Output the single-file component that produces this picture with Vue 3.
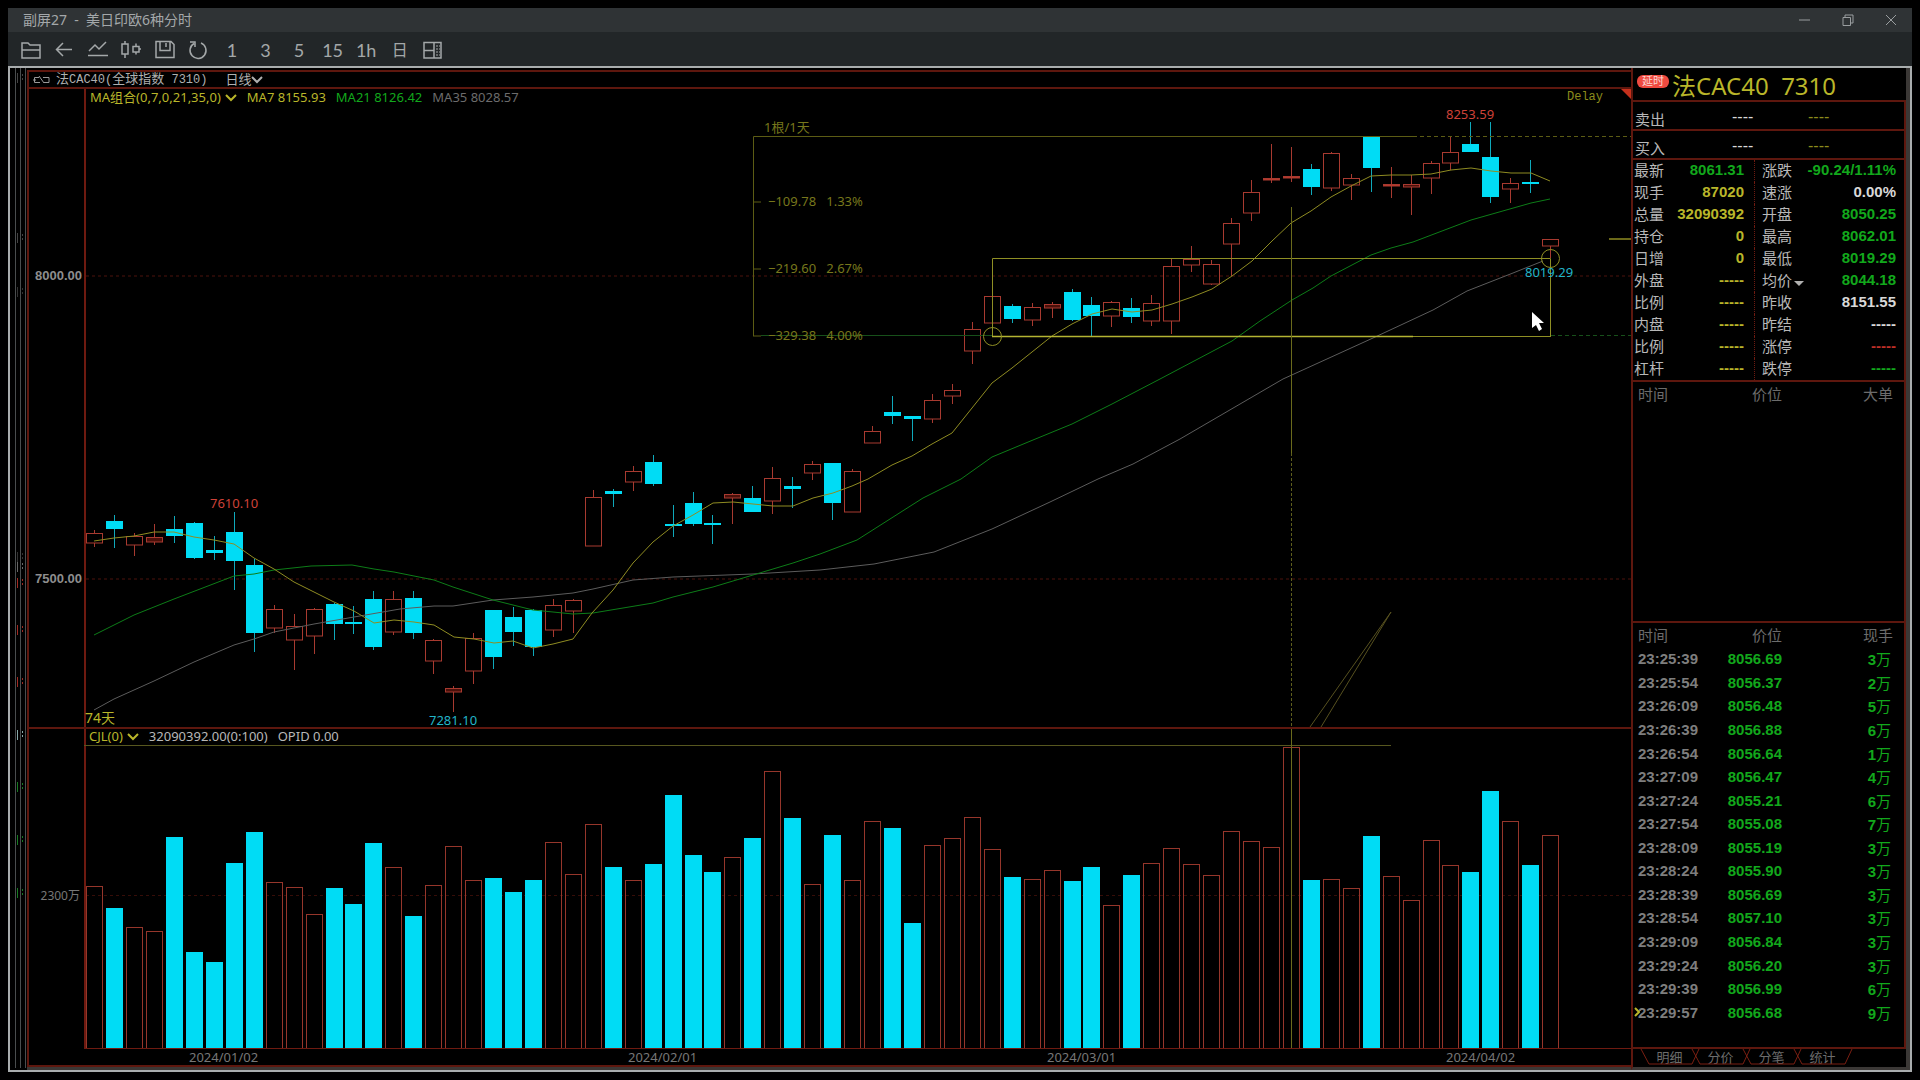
<script setup>
// candle: [filled, high, bodyTop, bodyBottom, low, volumeTop]
const raw = [
  [0, 530, 533, 543, 547, 886], [1, 515, 521, 529, 548, 908], [0, 533, 536, 545, 556, 927], [0, 524, 537, 542, 545, 931],
  [1, 516, 529, 536, 543, 837], [1, 522, 523, 558, 559, 952], [1, 536, 550, 553, 560, 962], [1, 512, 532, 561, 590, 863],
  [1, 559, 565, 633, 652, 832], [0, 605, 609, 628, 633, 882], [0, 614, 626, 640, 670, 887], [0, 608, 609, 636, 654, 914],
  [1, 603, 604, 624, 640, 888], [1, 606, 622, 624, 634, 904], [1, 591, 599, 647, 650, 843], [0, 591, 599, 632, 635, 867],
  [1, 591, 598, 633, 639, 916], [0, 639, 640, 661, 674, 885], [0, 686, 688, 692, 712, 846], [0, 633, 638, 671, 684, 880],
  [1, 610, 610, 657, 669, 878], [1, 607, 617, 632, 646, 892], [1, 609, 610, 647, 656, 880], [0, 599, 605, 630, 637, 842],
  [0, 599, 600, 611, 633, 874], [0, 490, 497, 546, 546, 824], [1, 489, 491, 494, 507, 867], [0, 466, 471, 482, 491, 880],
  [1, 455, 462, 484, 486, 864], [1, 505, 524, 526, 537, 795], [1, 492, 503, 524, 526, 855], [1, 515, 523, 525, 544, 872],
  [0, 493, 494, 498, 524, 857], [1, 486, 498, 512, 512, 838], [0, 467, 478, 501, 514, 771], [1, 477, 486, 489, 508, 818],
  [0, 461, 464, 473, 480, 884], [1, 463, 463, 503, 520, 835], [0, 469, 471, 512, 512, 880], [0, 426, 431, 443, 443, 821],
  [1, 396, 412, 416, 424, 828], [1, 416, 416, 419, 441, 923], [0, 394, 400, 419, 423, 845], [0, 384, 390, 396, 404, 838],
  [0, 322, 329, 351, 364, 817], [0, 296, 296, 323, 323, 849], [1, 304, 306, 319, 323, 877], [0, 303, 307, 320, 326, 879],
  [0, 302, 304, 308, 318, 870], [1, 289, 292, 320, 321, 881], [1, 297, 305, 316, 336, 867], [0, 301, 302, 316, 327, 905],
  [1, 298, 308, 317, 323, 875], [0, 295, 303, 321, 326, 863], [0, 259, 266, 321, 334, 848], [0, 246, 259, 265, 272, 864],
  [0, 260, 264, 284, 285, 875], [0, 218, 223, 244, 276, 831], [0, 180, 192, 213, 221, 841], [0, 144, 178, 180, 183, 847],
  [0, 147, 176, 178, 182, 747], [1, 164, 169, 187, 195, 880], [0, 152, 153, 188, 191, 879], [0, 174, 178, 185, 200, 888],
  [1, 137, 137, 168, 192, 836], [0, 167, 184, 186, 198, 876], [0, 175, 184, 187, 215, 900], [0, 161, 163, 178, 194, 840],
  [0, 136, 152, 163, 170, 865], [1, 122, 144, 152, 152, 872], [1, 122, 157, 197, 203, 791], [0, 178, 183, 189, 203, 821],
  [1, 160, 182, 184, 193, 865], [0, 239, 239, 246, 258, 835]
]
const candles = raw.map(([filled, high, top, bottom, low, vol], i) => ({
  filled: !!filled, high, top, bottom, low, vol, i,
  x: Math.round(94.2 + i * 19.945) + 0.5
}))

const ma7 = '94,541 114,538 134,536 154,532 174,532 194,537 214,540 234,544 254,558 274,569 294,582 314,592 334,602 354,611 374,623 394,620 414,622 434,625 454,637 474,639 494,643 513,641 533,648 553,644 573,639 592,613 613,590 633,563 653,542 673,526 693,515 713,503 733,502 753,504 773,506 793,506 813,498 833,493 852,486 868,479 892,465 912,456 932,444 952,433 972,408 992,383 1012,368 1032,352 1052,336 1072,324 1092,314 1112,309 1132,312 1152,310 1172,304 1192,297 1212,289 1232,276 1252,261 1272,241 1291,223 1311,211 1331,197 1351,186 1371,176 1391,175 1411,175 1431,174 1451,170 1471,168 1491,171 1511,173 1531,173 1550,181'
const ma21 = '94,635 134,615 174,599 234,576 254,574 274,570 311,566 352,565 374,569 394,572 434,580 453,587 493,600 533,610 573,614 593,613 653,603 673,597 713,587 753,575 793,563 820,554 857,540 923,498 961,479 992,457 1033,440 1072,424 1112,404 1160,379 1232,341 1260,321 1292,300 1313,288 1331,276 1371,255 1391,248 1413,242 1471,220 1531,203 1550,199'
const ma35 = '94,710 114,699 154,681 194,662 234,645 254,639 274,632 314,624 354,617 400,609 434,606 453,606 493,600 533,597 573,593 593,589 633,580 673,577 753,574 820,570 874,564 934,552 992,529 1050,502 1098,479 1133,464 1180,439 1283,379 1373,338 1433,310 1467,291 1513,273 1543,261'

const windowTitle = '副屏27  -  美日印欧6种分时'
const symbolTitle = '法CAC40  7310'

const ruler = [
  { y: 202, text: '−109.78   1.33%' },
  { y: 269, text: '−219.60   2.67%' },
  { y: 336, text: '−329.38   4.00%' }
]
const dates = [[189, '2024/01/02'], [628, '2024/02/01'], [1047, '2024/03/01'], [1446, '2024/04/02']]

const stats = [
  ['最新', '8061.31', 'g', '涨跌', '-90.24/1.11%', 'g'],
  ['现手', '87020', 'y', '速涨', '0.00%', 'w'],
  ['总量', '32090392', 'y', '开盘', '8050.25', 'g'],
  ['持仓', '0', 'y', '最高', '8062.01', 'g'],
  ['日增', '0', 'y', '最低', '8019.29', 'g'],
  ['外盘', '-----', 'y', '均价', '8044.18', 'g'],
  ['比例', '-----', 'y', '昨收', '8151.55', 'w'],
  ['内盘', '-----', 'y', '昨结', '-----', 'w'],
  ['比例', '-----', 'y', '涨停', '-----', 'r'],
  ['杠杆', '-----', 'y', '跌停', '-----', 'g']
]
const ticks = [
  ['23:25:39', '8056.69', 3], ['23:25:54', '8056.37', 2], ['23:26:09', '8056.48', 5], ['23:26:39', '8056.88', 6],
  ['23:26:54', '8056.64', 1], ['23:27:09', '8056.47', 4], ['23:27:24', '8055.21', 6], ['23:27:54', '8055.08', 7],
  ['23:28:09', '8055.19', 3], ['23:28:24', '8055.90', 3], ['23:28:39', '8056.69', 3], ['23:28:54', '8057.10', 3],
  ['23:29:09', '8056.84', 3], ['23:29:24', '8056.20', 3], ['23:29:39', '8056.99', 6], ['23:29:57', '8056.68', 9]
]
const tabs = ['明细', '分价', '分笔', '统计']
const stripMarks = [
  [78, '#444'], [238, '#444'], [292, '#333'], [557, '#333'], [567, '#666'], [583, '#a02a22'], [630, '#a02a22'],
  [682, '#a02a22'], [735, '#8aa'], [787, '#177a22'], [840, '#177a22'], [893, '#177a22']
]
</script>

<template>
  <div class="window">
    <header class="titlebar">
      <h1>{{ windowTitle }}</h1>
      <div class="winbtns">
        <button aria-label="最小化"><svg width="12" height="12"><path d="M0 6H11" /></svg></button>
        <button aria-label="还原"><svg width="12" height="12"><path d="M1 3.500H8.500V11.500H1ZM3 3V1H11V9H9" /></svg></button>
        <button aria-label="关闭"><svg width="12" height="12"><path d="M1 1L11 11M11 1L1 11" /></svg></button>
      </div>
    </header>

    <div class="toolbar">
      <nav class="tools">
        <button aria-label="打开"><svg width="22" height="20"><path d="M2 18V3H8L10 5H20V18ZM2 10H20" /></svg></button>
        <button aria-label="返回"><svg width="22" height="20"><path d="M19 9.500H4M10 3L3.500 9.500L10 16" /></svg></button>
        <button aria-label="分时"><svg width="22" height="20"><path d="M2 11L8 5L12 9L19 2M1 15.500H21" /></svg></button>
        <button aria-label="K线"><svg width="22" height="20"><path d="M2 4H8V14H2ZM5 1V4M5 14V18M13 6.500H19V12H13ZM16 3.500V6.500M16 12V14.500M19 9H21" /></svg></button>
        <button aria-label="保存"><svg width="22" height="20"><path d="M2 1.500H17L20 4.500V17.500H2ZM6 2V10.500H16V2M12 3V7" /></svg></button>
        <button aria-label="刷新"><svg width="22" height="20"><path d="M14 3A8 8 0 1 1 7 3.500M3 2H8V7" /></svg></button>
        <button>1</button>
        <button>3</button>
        <button>5</button>
        <button>15</button>
        <button>1h</button>
        <button class="day">日</button>
        <button aria-label="布局"><svg width="22" height="20"><path d="M2 2.500H19V18H2ZM12 3V18M2 10.500H12" /><path d="M14 6H18M14 9H18M14 12H18M14 15H18" stroke-width="1" stroke-dasharray="2 1" /></svg></button>
      </nav>
    </div>

    <main class="content">
      <div class="strip">
        <svg width="17" height="1002" viewBox="10 68 17 1002">
          <path d="M15.500 68V1068M20.500 68V1068M25.500 68V1068" stroke="#4a4d4e" stroke-width="1" />
          <g v-for="m in stripMarks" :key="m[0]" :stroke="m[1]">
            <path :d="`M17.500 ${m[0] - 5}V${m[0] + 5}`" />
            <path :d="`M22.500 ${m[0] - 4}V${m[0] + 4}`" stroke-dasharray="2 2" />
          </g>
        </svg>
      </div>

      <section class="chart">
        <div class="chart-head">
          <svg class="link" width="19" height="10"><path d="M7 2.500H2.500V7.500H8M7 1L12 8M11 2.500H17V7.500H12M1 5H4" /></svg>
          <span class="sym"><b>法</b>CAC40(<b>全球指数</b> 7310)</span>
          <button class="period">日线<svg width="12" height="8"><path d="M1 1L6 6L11 1" /></svg></button>
        </div>
        <div class="ma-row">
          <button class="y">MA组合(0,7,0,21,35,0)<svg width="12" height="8"><path d="M1 1L6 6L11 1" /></svg></button>
          <span class="y">MA7 8155.93</span>
          <span class="g">MA21 8126.42</span>
          <span class="dim">MA35 8028.57</span>
          <span class="delay">Delay</span>
          <i class="corner"></i>
        </div>

        <svg class="plot" viewBox="29 107 1602 620">
          <path d="M85 107V727" class="axis" />
          <path d="M86 276H1631M86 579H1631" class="grid" />
          <text x="82" y="280" class="price-label">8000.00</text>
          <text x="82" y="583" class="price-label">7500.00</text>

          <g v-for="c in candles" :key="c.i" :class="c.filled ? 'down' : 'up'">
            <path :d="`M${c.x} ${c.high}V${c.top}M${c.x} ${c.bottom}V${c.low}`" />
            <rect v-if="c.filled" :x="c.x - 8.5" :y="c.top" width="17" :height="c.bottom - c.top" />
            <rect v-else :x="c.x - 8" :y="c.top + 0.5" width="16" :height="c.bottom - c.top - 0.5" :class="{ thin: c.bottom - c.top < 6, flat: c.bottom - c.top < 3 }" />
          </g>

          <polyline :points="ma35" class="ma" stroke="#5c5c5c" />
          <polyline :points="ma21" class="ma" stroke="#0d7d18" />
          <polyline :points="ma7" class="ma" stroke="#8f8c22" />

          <g class="ruler">
            <path d="M1413 136.500H753.500V336M753 202H761M753 269H761M753 336H761" />
            <path d="M1413 136.500H1631" stroke-dasharray="4 3" />
            <path d="M761 335.500H992" stroke="#17501a" />
            <path d="M1551 335.500H1631" stroke="#17501a" stroke-dasharray="4 3" />
            <text x="764" y="132">1根/1天</text>
            <text v-for="r in ruler" :key="r.y" x="768" :y="r.y + 4">{{ r.text }}</text>
          </g>

          <g class="box">
            <path d="M992.500 336.500V258.500H1550.500V336.500" />
            <path d="M992 336.500H1413" stroke="#b4b432" stroke-width="1.5" />
            <path d="M1413 336.500H1551" />
            <circle cx="992.5" cy="336.5" r="9" />
            <circle cx="1550.5" cy="258.5" r="9" />
          </g>

          <path d="M1291.500 207V453" stroke="#6a6a1c" />
          <path d="M1291.500 453V727" stroke="#5f5f1c" stroke-dasharray="3 2" />
          <path d="M1391 612L1310 727M1391 612L1321 727" stroke="#57511f" />
          <path d="M1609 239H1631" stroke="#8f8c22" stroke-width="1.5" />

          <text x="210" y="508" class="hi">7610.10</text>
          <text x="429" y="725" class="lo">7281.10</text>
          <text x="1446" y="119" class="hi">8253.59</text>
          <text x="1525" y="277" class="lo">8019.29</text>
          <text x="85" y="723" class="span-label">74天</text>
          <path d="M1532 312V328L1536 325L1539 331L1542 329L1539 323H1544Z" fill="#fff" />
        </svg>

        <div class="vol-head">
          <button class="y">CJL(0)<svg width="12" height="8"><path d="M1 1L6 6L11 1" /></svg></button>
          <span>32090392.00(0:100)</span>
          <span>OPID 0.00</span>
        </div>

        <svg class="plot" viewBox="29 745 1602 320">
          <path d="M85 729V1048" class="axis" />
          <path d="M86 895.500H1631" class="grid" opacity=".7" />
          <path d="M84 745.500H1391" stroke="#57571f" />
          <g v-for="c in candles" :key="c.i" :class="c.filled ? 'down' : 'up vol'">
            <rect v-if="c.filled" :x="c.x - 8.5" :y="c.vol" width="17" :height="1048 - c.vol" />
            <rect v-else :x="c.x - 8" :y="c.vol + 0.5" width="16" :height="1048 - c.vol" />
          </g>
          <path d="M84 1048.500H1631" class="base" />
          <path d="M1291.500 729V1048" stroke="#6a6a1c" />
          <text x="80" y="900" class="axis-text unit">2300万</text>
          <text v-for="d in dates" :key="d[0]" :x="d[0]" y="1062" class="axis-text">{{ d[1] }}</text>
        </svg>
      </section>

      <aside class="side">
        <div class="quote-title">
          <span class="badge">延时</span>
          <h2>{{ symbolTitle }}</h2>
        </div>
        <div class="boxed">
          <div class="order"><span>卖出</span><span class="w">----</span><span class="dy">----</span></div>
          <div class="order"><span>买入</span><span class="w">----</span><span class="dy">----</span></div>
          <table class="stats">
            <colgroup><col class="c1"><col class="c2"><col class="c3"><col></colgroup>
            <tbody>
              <tr v-for="(s, i) in stats" :key="i">
                <th>{{ s[0] }}</th><td :class="s[2]">{{ s[1] }}</td>
                <th>{{ s[3] }}<i v-if="s[3] === '均价'" class="caret"></i></th><td :class="s[5]">{{ s[4] }}</td>
              </tr>
            </tbody>
          </table>
          <table class="list big">
            <thead><tr><th>时间</th><th>价位</th><th>大单</th></tr></thead>
          </table>
          <table class="list ticks">
            <thead><tr><th>时间</th><th>价位</th><th>现手</th></tr></thead>
            <tbody>
              <tr v-for="(t, i) in ticks" :key="t[0]">
                <td><svg v-if="i === ticks.length - 1" class="mark" width="6" height="10"><path d="M1 1L5 5L1 9" /></svg>{{ t[0] }}</td>
                <td>{{ t[1] }}</td>
                <td>{{ t[2] }}<span>万</span></td>
              </tr>
            </tbody>
          </table>
        </div>
        <div class="tabs">
          <button v-for="t in tabs" :key="t">
            <svg width="60" height="17"><path d="M1 0L9 15H52L59 0" /></svg><span>{{ t }}</span>
          </button>
        </div>
      </aside>
    </main>
  </div>
</template>

<style>
body {
  margin: 0;
  background: #000;
}
</style>

<style scoped>
.window {
  margin: 8px;
  font-family: "Noto Sans", "Noto Sans CJK SC", sans-serif;
  font-size: 13px;
  color: #b8b8b8;
}
svg {
  fill: none;
  stroke-width: 1;
}
button {
  background: none;
  border: 0;
  padding: 0;
  margin: 0;
  font: inherit;
  color: inherit;
}
button svg {
  stroke: currentColor;
}
.titlebar {
  display: flex;
  justify-content: space-between;
  align-items: center;
  height: 24px;
  background: #2f3335;
}
h1 {
  margin: 0 0 0 15px;
  font-size: 14px;
  line-height: 20px;
  font-weight: 400;
  white-space: pre;
  color: #a4a8aa;
}
.winbtns {
  display: flex;
}
.winbtns button {
  width: 43px;
  height: 24px;
  display: grid;
  place-items: center;
  color: #9a9ea0;
}
.toolbar {
  background: #222628;
  padding: 0 6px;
}
.tools {
  display: grid;
  grid-template-columns: repeat(13, 1fr);
  width: 436px;
  height: 34px;
  color: #a4a8a9;
}
.tools button {
  display: grid;
  place-items: center;
  padding-top: 2px;
  font-family: Lato, "Noto Sans CJK SC", sans-serif;
  font-size: 18px;
  line-height: 32px;
}
.tools .day {
  font-size: 16px;
}
.tools svg {
  stroke-width: 1.5;
}
.content {
  display: grid;
  grid-template-columns: 17px minmax(0, 1fr) 279px;
  border: 2px solid #a9adae;
  background: #000;
}
.strip svg {
  display: block;
}
.chart {
  margin-top: 2px;
  border: 2px solid #5e170e;
  border-right: 0;
  align-self: start;
  box-shadow: 0 3px 0 #3b3836;
}
.chart-head {
  display: flex;
  align-items: center;
  height: 15px;
  padding-left: 3px;
  border-bottom: 2px solid #5e170e;
  line-height: 15px;
  color: #b0b0b0;
}
.link {
  stroke: #999;
  margin-right: 5px;
}
.sym {
  font-family: "Liberation Mono", "Noto Sans CJK SC", monospace;
  font-size: 12px;
  white-space: pre;
}
.sym b {
  font-size: 13px;
  font-weight: 400;
}
.period {
  margin-left: 18px;
  line-height: 15px;
}
.period svg {
  stroke-width: 2;
}
.ma-row,
.vol-head {
  display: flex;
  align-items: flex-start;
  padding-left: 4px;
  line-height: 16px;
  gap: 10px;
}
.ma-row {
  position: relative;
  height: 18px;
  margin-left: 55px;
  border-left: 2px solid #6e1a10;
}
.vol-head {
  height: 16px;
  padding-left: 60px;
  border-top: 2px solid #5e170e;
  line-height: 14px;
}
.ma-row svg,
.vol-head svg {
  margin-left: 4px;
  stroke-width: 2;
}
.delay {
  margin-left: auto;
  margin-right: 28px;
  font-family: "Liberation Mono", monospace;
  font-size: 12px;
  color: #8c8c1c;
}
.corner {
  position: absolute;
  top: 0;
  right: 0;
  border-top: 10px solid #c4301c;
  border-left: 10px solid transparent;
}
.y { color: #b9b62a; }
.g { color: #12a81c; }
.w { color: #d8d8d8; }
.r { color: #c03028; }
.dy { color: #8c8c1c; }
.dim { color: #6c6c6c; }

.plot {
  display: block;
  width: 100%;
  height: auto;
  overflow: visible;
}
.plot text {
  font-size: 13px;
  white-space: pre;
}
.axis {
  stroke: #6e1a10;
  stroke-width: 2;
}
.base {
  stroke: #6e1a10;
}
.grid {
  stroke: #4d120c;
  stroke-dasharray: 3 3;
}
.plot .price-label {
  font-family: "Liberation Sans", sans-serif;
  font-weight: 700;
  text-anchor: end;
  fill: #8e8e8e;
}
.axis-text {
  fill: #777;
}
.plot .unit {
  font-size: 12px;
  text-anchor: end;
}
.up {
  stroke: #a83a30;
}
.up.vol {
  stroke: #96362b;
}
.up .thin {
  fill: #4a100a;
}
.up .flat {
  fill: #c23a2c;
}
.down {
  stroke: #0fa9bb;
}
.down rect {
  fill: #00dcf5;
  stroke: none;
}
.ruler {
  stroke: #5c5c14;
}
.ruler text {
  fill: #77771c;
  stroke: none;
}
.box {
  stroke: #8f8f24;
}
.hi {
  fill: #cf4238;
}
.lo {
  fill: #22b5c8;
}
.plot .span-label {
  font-size: 14px;
  fill: #b9b62a;
}

.side {
  display: flex;
  flex-direction: column;
  box-sizing: border-box;
  border-left: 2px solid #5e170e;
  border-right: 4px solid #3b3836;
  border-bottom: 3px solid #3b3836;
}
.quote-title {
  display: flex;
  height: 32px;
  padding-left: 4px;
  gap: 3px;
  line-height: 32px;
}
.badge {
  width: 32px;
  height: 13px;
  margin-top: 7px;
  border-radius: 6px;
  background: #ee4a40;
  color: #fbd8d4;
  font-size: 11px;
  line-height: 12px;
  text-align: center;
}
h2 {
  margin: 2px 0 0;
  font-size: 24px;
  line-height: 32px;
  font-weight: 400;
  white-space: pre;
  color: #b9b62a;
}
.boxed {
  flex: 1;
  display: flex;
  flex-direction: column;
  border-right: 2px solid #5e170e;
  border-bottom: 2px solid #5e170e;
}
.order {
  display: grid;
  grid-template-columns: 97px 76px 1fr;
  box-sizing: border-box;
  height: 29px;
  padding: 6px 0 0 2px;
  border-top: 2px solid #5e170e;
  font-size: 15px;
  line-height: 22px;
}
.order .w,
.order .dy {
  font-family: "Liberation Sans", sans-serif;
  font-size: 16px;
  line-height: 18px;
}
table {
  border-collapse: separate;
  border-spacing: 0;
  table-layout: fixed;
  width: 100%;
}
th {
  font-weight: 400;
  font-size: 15px;
  text-align: left;
  padding: 0;
  white-space: nowrap;
}
td {
  font-family: "Liberation Sans", "Noto Sans CJK SC", sans-serif;
  font-weight: 700;
  font-size: 15px;
  padding: 0;
  text-align: right;
}
.stats {
  border-top: 2px solid #5e170e;
}
.c1 { width: 42px; }
.c2 { width: 80px; }
.c3 { width: 50px; }
.stats th,
.stats td {
  height: 22px;
  line-height: 20px;
  vertical-align: top;
}
.stats th:first-child { padding-left: 1px; }
.stats th:nth-child(3) { padding-left: 7px; }
.stats td:nth-child(2) {
  padding-right: 10px;
  border-right: 1px dotted #6e1a10;
}
.stats td:last-child { padding-right: 8px; }
.caret {
  display: inline-block;
  margin-left: 2px;
  border: 5px solid transparent;
  border-top-color: #b0b0b0;
  border-bottom: 0;
}
.list th {
  height: 24px;
  line-height: 24px;
  color: #6c6c6c;
}
.list th:first-child,
.list td:first-child {
  width: 75px;
  padding-left: 5px;
  text-align: left;
  position: relative;
}
.list th:nth-child(2),
.list td:nth-child(2) {
  width: 69px;
  text-align: right;
}
.list th:last-child {
  padding-right: 11px;
  text-align: right;
}
.list td:last-child {
  padding-right: 13px;
}
.list td {
  height: 22px;
  color: #12a81c;
}
.list td:first-child { color: #7e7e7e; }
.list td span {
  font-weight: 400;
}
.big {
  flex: 1;
  display: block;
  border-top: 2px solid #5e170e;
}
.big thead {
  display: table;
  width: 100%;
  table-layout: fixed;
}
.ticks {
  height: 403px;
  margin-bottom: 23px;
  border-top: 2px solid #5e170e;
}
.list .mark {
  position: absolute;
  left: 1px;
  top: 7px;
  stroke: #b9b62a;
  stroke-width: 2;
}
.tabs {
  display: flex;
  height: 18px;
  padding-left: 7px;
}
.tabs button {
  position: relative;
  width: 51px;
  height: 17px;
  line-height: 13px;
  padding-left: 8px;
  color: #6c6c6c;
}
.tabs svg {
  position: absolute;
  left: 0;
  top: 0;
  stroke: #7a1f12;
}
</style>
